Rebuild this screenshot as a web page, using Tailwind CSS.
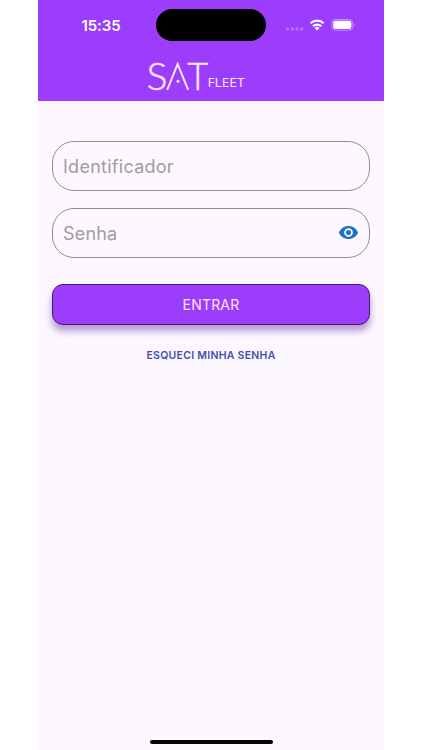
<!DOCTYPE html>
<html lang="pt-BR">
<head>
    <meta charset="UTF-8">
    <meta name="viewport" content="width=device-width, initial-scale=1.0">
    <title>SAT Fleet</title>
    <script src="https://cdn.jsdelivr.net/npm/@tailwindcss/browser@4"></script>
</head>
<body class="bg-white font-['Inter',sans-serif]">
    <div class="ml-[38px] w-[346px] h-[750px] bg-[#fdf7ff] flex flex-col overflow-hidden">
        <!-- Header -->
        <header class="h-[100.5px] shrink-0 bg-[#9d3dfc] flex flex-col">
            <div class="h-[50px] flex items-center text-white">
                <div class="w-[118px] pl-[43.5px] pt-px text-[15px] tracking-[-0.1px] font-semibold leading-5">15:35</div>
                <div class="w-[110px] h-[32.5px] rounded-full bg-black"></div>
                <svg class="ml-[18px] w-[76px] h-5" viewBox="0 0 76 20" fill="none">
                    <g fill="#fff" fill-opacity=".28">
                        <circle cx="3.6" cy="13.9" r="1.6"/>
                        <circle cx="8.4" cy="13.9" r="1.6"/>
                        <circle cx="13.1" cy="13.9" r="1.6"/>
                        <circle cx="17.8" cy="13.9" r="1.6"/>
                    </g>
                    <g stroke="#fff" stroke-width="2.2">
                        <path d="M26.6 8.3a9.3 9.3 0 0 1 13 0"/>
                        <path d="M29 11.3a5.9 5.9 0 0 1 8.2 0"/>
                    </g>
                    <path d="M30.7 13a3.5 3.5 0 0 1 4.8 0L33.1 15.4z" fill="#fff"/>
                    <rect x="47.9" y="4.5" width="20.8" height="10.8" rx="3.4" stroke="#fff" stroke-opacity=".4"/>
                    <rect x="49.2" y="5.8" width="18.2" height="8.2" rx="2.3" fill="#fff"/>
                    <path d="M70 8.3v3.2c1.1-.5 1.1-2.7 0-3.2z" fill="#fff" fill-opacity=".5"/>
                </svg>
            </div>
            <svg class="ml-[108px] mt-[2px] w-[102px] h-12" viewBox="0 -6 102 48" fill="#fde3ff">
                <g font-family="Lato, sans-serif" font-weight="300" font-size="36.5" stroke="#fde3ff" stroke-width=".45">
                    <text x=".5" y="31.8" textLength="21" lengthAdjust="spacingAndGlyphs">S</text>
                    <text x="41.3" y="31.8" textLength="21" lengthAdjust="spacingAndGlyphs">T</text>
                </g>
                <path d="M21.2 31.8 31.6 6.2 42.2 31.8" fill="none" stroke="#fde3ff" stroke-width="2"/>
                <circle cx="32" cy="23.3" r="1.5"/>
                <text x="61.5" y="29.2" font-family="Noto Sans, sans-serif" font-size="12.8" textLength="37" lengthAdjust="spacingAndGlyphs">FLEET</text>
            </svg>
        </header>

        <!-- Login form -->
        <main class="flex flex-col items-center pt-[40.5px] px-[14px]">
            <div class="w-full h-[49.5px] border border-[#928c96] rounded-[22px] flex items-center pl-[10px]">
                <span class="pt-px text-[18px] tracking-[0.27px] text-[#a19ca4]">Identificador</span>
            </div>
            <div class="mt-[17.5px] w-full h-[49.5px] border border-[#928c96] rounded-[22px] flex items-center justify-between pl-[10px] pr-[10px]">
                <span class="pt-px text-[18px] tracking-[0.2px] text-[#a19ca4]">Senha</span>
                <svg class="w-[21px] h-[21px]" viewBox="0 0 24 24" fill="#1f73cb">
                    <path d="M12 4.5C7 4.5 2.73 7.61 1 12c1.73 4.39 6 7.5 11 7.5s9.27-3.11 11-7.5c-1.73-4.39-6-7.5-11-7.5zM12 17c-2.76 0-5-2.24-5-5s2.24-5 5-5 5 2.24 5 5-2.24 5-5 5zm0-8c-1.66 0-3 1.34-3 3s1.34 3 3 3 3-1.34 3-3-1.34-3-3-3z"/>
                </svg>
            </div>
            <button class="mt-[26px] w-full h-[41px] rounded-[11px] border border-[#431a6d] bg-[#9d3dfc] text-[14px] tracking-[0.2px] text-[#fbe6ff] shadow-[0_6px_7px_rgba(80,20,150,0.42)]">ENTRAR</button>
            <a href="#" class="mt-[23px] text-[10.5px] leading-4 font-semibold tracking-[0.27px] text-[#4150ad]">ESQUECI MINHA SENHA</a>
        </main>

        <!-- Home indicator -->
        <div class="mt-auto mb-[6px] mx-auto w-[123px] h-[4.5px] shrink-0 rounded-full bg-black"></div>
    </div>
</body>
</html>
